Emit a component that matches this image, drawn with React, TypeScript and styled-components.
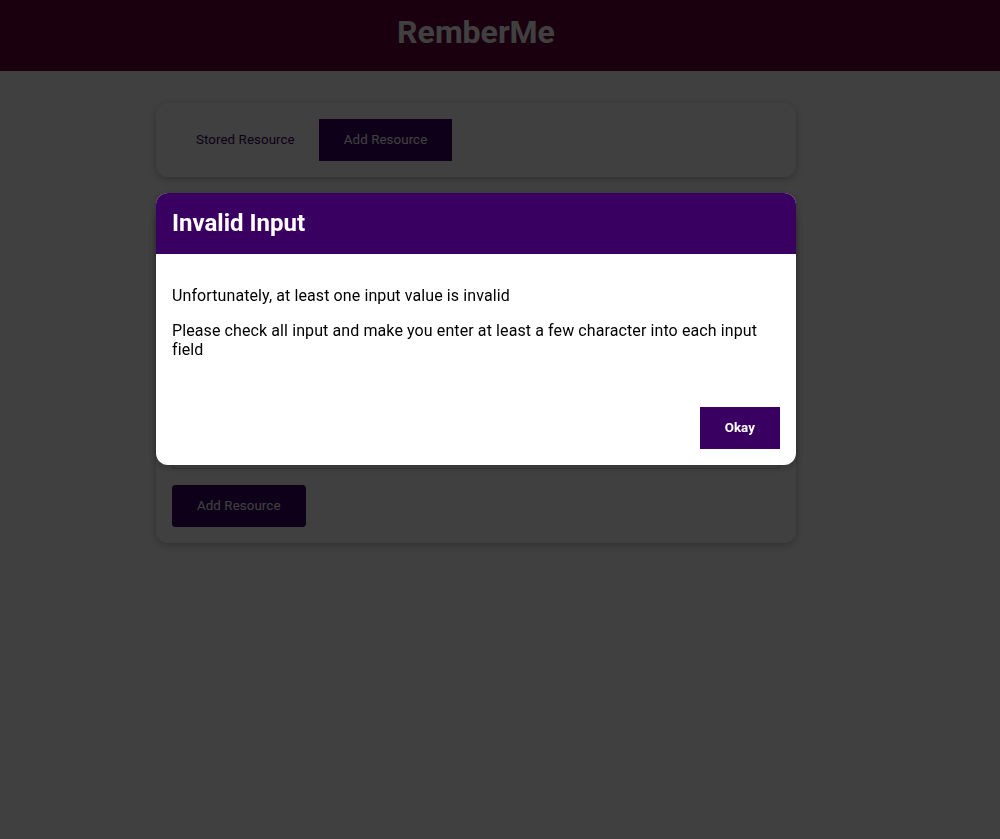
import React from "react";
import styled, { createGlobalStyle } from "styled-components";

const GlobalStyle = createGlobalStyle`
  * {
    box-sizing: border-box;
  }
  html {
    font-family: Roboto, "Liberation Sans", sans-serif;
  }
  body {
    margin: 0;
    background: #ffffff;
  }
`;

const HeaderStyled = styled.header`
  width: 100%;
  height: 71px;
  display: flex;
  justify-content: center;
  align-items: center;
  padding: 0 48px 8px 0;
  background-color: #67003f;

  h1 {
    color: white;
    margin: 0;
    font-size: 32px;
  }
`;

const MainStyled = styled.main`
  padding-right: 48px;
`;

const CardStyled = styled.div`
  border-radius: 12px;
  box-shadow: 0 2px 8px rgba(0, 0, 0, 0.26);
  padding: 1rem;
  margin: 2rem auto;
  max-width: 40rem;
`;

const CardRowStyled = styled.div`
  display: flex;
  align-items: center;
`;

const ButtonStyled = styled.button<{ $flat?: boolean; $bold?: boolean }>`
  padding: 0.75rem 1.5rem;
  font-family: inherit;
  font-size: 13.333px;
  line-height: 16px;
  letter-spacing: 0.08px;
  font-weight: ${(p) => (p.$bold ? 700 : 400)};
  background-color: ${(p) => (p.$flat ? "transparent" : "#3a0061")};
  border: ${(p) => (p.$flat ? "none" : "1px solid #3a0061")};
  color: ${(p) => (p.$flat ? "#3a0061" : "white")};
  cursor: pointer;
`;

const SubmitButtonStyled = styled(ButtonStyled)`
  border-radius: 3px;
`;

const FormStyled = styled.form``;

const FormControlStyled = styled.div`
  margin: 1rem 0;

  label {
    font-weight: bold;
    display: block;
    margin-bottom: 0.5rem;
  }

  input,
  textarea {
    display: block;
    width: 100%;
    font: inherit;
    padding: 0.15rem;
    border: 1px solid #ccc;
  }
`;

const BackdropStyled = styled.div`
  position: fixed;
  top: 0;
  left: 0;
  height: 100vh;
  width: 100%;
  background-color: rgba(0, 0, 0, 0.75);
  z-index: 10;
`;

const DialogStyled = styled.div`
  position: fixed;
  top: 193px;
  left: calc(50% - 20rem - 24px);
  width: 40rem;
  z-index: 100;
  border-radius: 12px;
  box-shadow: 0 2px 8px rgba(0, 0, 0, 0.26);
  overflow: hidden;
  background-color: white;
`;

const DialogHeaderStyled = styled.header`
  background-color: #3a0061;
  color: white;
  width: 100%;
  padding: 1rem;

  h2 {
    margin: 0;
    font-size: 24px;
    line-height: 29px;
  }
`;

const DialogSectionStyled = styled.section`
  padding: 1rem;
  color: #000;

  p {
    margin: 1rem 0;
    line-height: 19px;
    letter-spacing: 0.1px;
  }
`;

const DialogMenuStyled = styled.menu`
  padding: 1rem;
  display: flex;
  justify-content: flex-end;
  margin: 0;
`;

const App = () => (
  <>
    <GlobalStyle />
    <HeaderStyled>
      <h1>RemberMe</h1>
    </HeaderStyled>
    <MainStyled>
      <CardStyled>
        <CardRowStyled>
          <ButtonStyled $flat>Stored Resource</ButtonStyled>
          <ButtonStyled>Add Resource</ButtonStyled>
        </CardRowStyled>
      </CardStyled>
      <CardStyled>
        <FormStyled onSubmit={(e) => e.preventDefault()}>
          <FormControlStyled>
            <label htmlFor="title">Title</label>
            <input id="title" name="title" type="text" />
          </FormControlStyled>
          <FormControlStyled>
            <label htmlFor="description">Description</label>
            <textarea id="description" name="description" rows={3} />
          </FormControlStyled>
          <FormControlStyled>
            <label htmlFor="link">Link</label>
            <input id="link" name="link" type="url" />
          </FormControlStyled>
          <div>
            <SubmitButtonStyled type="submit">Add Resource</SubmitButtonStyled>
          </div>
        </FormStyled>
      </CardStyled>
    </MainStyled>
    <BackdropStyled />
    <DialogStyled>
      <DialogHeaderStyled>
        <h2>Invalid Input</h2>
      </DialogHeaderStyled>
      <DialogSectionStyled>
        <p>Unfortunately, at least one input value is invalid</p>
        <p>
          Please check all input and make you enter at least a few character
          into each input field
        </p>
      </DialogSectionStyled>
      <DialogMenuStyled>
        <ButtonStyled $bold>Okay</ButtonStyled>
      </DialogMenuStyled>
    </DialogStyled>
  </>
);

export default App;
